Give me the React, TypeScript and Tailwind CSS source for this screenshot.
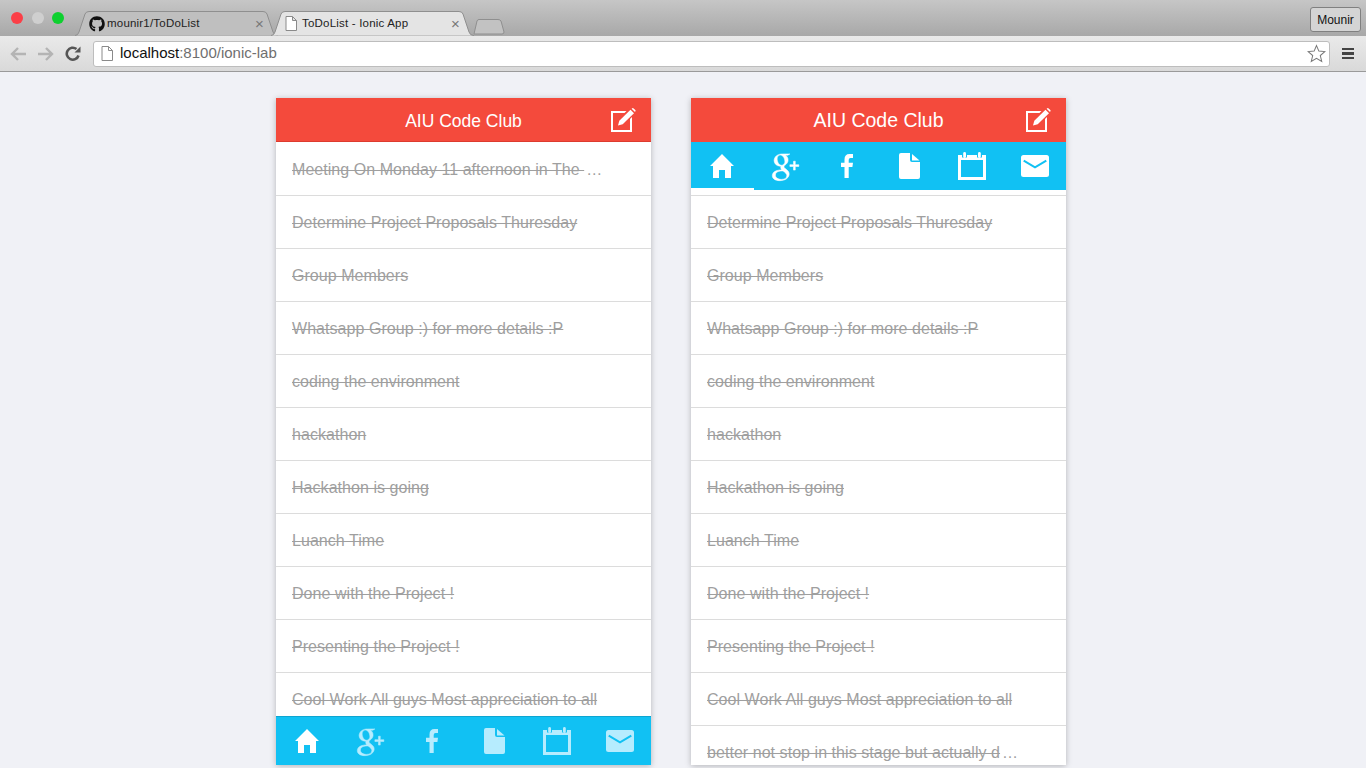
import React from 'react';
import { FaGithub } from 'react-icons/fa';
import { TiSocialGooglePlus } from 'react-icons/ti';

const TODOS = [
  'Determine Project Proposals Thuresday',
  'Group Members',
  'Whatsapp Group :) for more details :P',
  'coding the environment',
  'hackathon',
  'Hackathon is going',
  'Luanch Time',
  'Done with the Project !',
  'Presenting the Project !',
  'Cool Work All guys Most appreciation to all',
];

const HomeIcon = () => (
  <svg width="24" height="24" viewBox="0 0 24 24" fill="currentColor">
    <path d="M12 0 L24 12 H21 V24 H15 V16 H9 V24 H3 V12 H0 Z" />
  </svg>
);

const FacebookIcon = () => (
  <svg width="12" height="24" viewBox="0 0 12 24" fill="currentColor">
    <path d="M3.5 24 V13 H0 V8.8 H3.5 V5.5 Q3.5 0 8.5 0 H12 V4 H9.5 Q7.7 4 7.7 6 V8.8 H12 L11.4 13 H7.7 V24 Z" />
  </svg>
);

const DocIcon = () => (
  <svg width="21" height="26" viewBox="0 0 21 26" fill="currentColor">
    <path d="M2 0 H11 V7 Q11 9 13 9 H21 V24 A2 2 0 0 1 19 26 H2 A2 2 0 0 1 0 24 V2 A2 2 0 0 1 2 0 Z" />
    <path d="M13 1 L20.5 7.5 H13 Z" />
  </svg>
);

const CalendarIcon = () => (
  <svg width="28" height="28" viewBox="0 0 28 28" fill="currentColor">
    <path fillRule="evenodd" d="M0 3 H4 V5.5 H9 V3 H19 V5.5 H24 V3 H28 V28 H0 Z M3 8 V25 H25 V8 Z" />
    <rect x="5.2" y="0" width="2.8" height="6" rx="1.4" />
    <rect x="20" y="0" width="2.8" height="6" rx="1.4" />
  </svg>
);

const MailIcon = () => (
  <svg width="28" height="22" viewBox="0 0 28 22" fill="currentColor">
    <rect width="28" height="22" rx="2.5" />
    <path d="M2.7 5.7 L14 12.3 L25.3 5.7" fill="none" stroke="#11c1f3" strokeWidth="2" />
  </svg>
);

const ComposeIcon = () => (
  <svg width="25" height="24" viewBox="0 0 25 24" fill="white">
    <path d="M0 3 H15.5 L13.5 5 H2 V22 H19 V11 L21 9 V24 H0 Z" />
    <path d="M7 17.5 L8.3 12.8 L19.5 1.8 L23 5.2 L11.7 16.2 Z" />
    <path d="M20.6 0.7 L21.4 0.2 Q22 -0.1 22.6 0.4 L24.3 2.1 Q24.8 2.7 24.4 3.3 L24 3.9 Z" />
  </svg>
);

const TabIcons = ({ dim }: { dim: boolean }) => {
  const rest = dim ? 'text-[#b6ecfe]' : 'text-white';
  return (
    <>
      <div className="flex-1 flex items-center justify-center text-white"><HomeIcon /></div>
      <div className={`flex-1 flex items-center justify-center ${rest}`}><TiSocialGooglePlus size={43} className="stroke-current stroke-[0.3px]" /></div>
      <div className={`flex-1 flex items-center justify-center ${rest}`}><FacebookIcon /></div>
      <div className={`flex-1 flex items-center justify-center ${rest}`}><DocIcon /></div>
      <div className={`flex-1 flex items-center justify-center ${rest}`}><CalendarIcon /></div>
      <div className={`flex-1 flex items-center justify-center ${rest}`}><MailIcon /></div>
    </>
  );
};

const Header = ({ large }: { large: boolean }) => (
  <div className={`relative h-[44px] shrink-0 bg-[#f44a3c] flex items-center justify-center ${large ? 'pt-[1px]' : 'pt-[3px] border-b border-[#dd3b2f]'}`}>
    <span className={`text-white ${large ? 'text-[19.5px]' : 'text-[17.5px]'}`}>AIU Code Club</span>
    <div className="absolute right-[15px] top-[10px]"><ComposeIcon /></div>
  </div>
);

// cut = Ionic clipped this title with an ellipsis
const Row = ({ text, cut }: { text: string; cut?: boolean }) => (
  <div className="h-[53px] shrink-0 border-b border-[#dcdcdc] pl-4 pt-[2px] flex items-center whitespace-pre text-[16px] tracking-[0.05px] text-[#9f9f9f]">
    <span className="line-through">{text}</span>
    {cut && <span className="ml-[2px]">…</span>}
  </div>
);

const ToolbarPage = () => (
  <svg width="12" height="15" viewBox="0 0 12 15" fill="#fff" stroke="#8a8a8a">
    <path d="M1 .5 H7.5 L11.5 4.5 V14.5 H1 Z M7.5 .5 V4.5 H11.5" />
  </svg>
);

const BrowserTab = ({ title, active, icon }: { title: string; active: boolean; icon: React.ReactNode }) => (
  <div className="relative w-[197px] h-[25px] flex items-center pl-[14px] pr-[8px] -mr-[1px]">
    <svg className="absolute inset-0" width="210" height="25" viewBox="0 0 210 25">
      <path
        d="M0 24.5 Q3 24.5 4 21 L10 3 Q11 .5 14 .5 H188 Q191 .5 192 3 L198 21 Q199 24.5 203 24.5"
        fill={active ? '#e4e4e4' : '#bfbfbf'}
        stroke="#8f8f8f"
      />
    </svg>
    <div className="relative flex items-center gap-[2px] w-full text-[11.5px] text-[#222] tracking-[0.2px]">
      {icon}
      <span className="flex-1">{title}</span>
      <span className="text-[#777] text-[15px] leading-none">×</span>
    </div>
  </div>
);

const App: React.FC = () => {
  return (
    <div className="w-[1366px] h-[768px] overflow-hidden bg-[#f0f1f6] font-['Liberation_Sans',sans-serif]">
      {/* browser chrome */}
      <div className="h-[36px] bg-gradient-to-b from-[#c6c6c6] to-[#a8a8a8] flex items-end relative">
        <div className="w-[75px] h-full flex items-center pl-[11px] gap-[8.5px]">
          <span className="w-[12px] h-[12px] rounded-full bg-[#fb3f47]" />
          <span className="w-[12px] h-[12px] rounded-full bg-[#cfcfcf]" />
          <span className="w-[12px] h-[12px] rounded-full bg-[#0ed02f]" />
        </div>
        <BrowserTab title="mounir1/ToDoList" active={false} icon={<FaGithub size={16} color="#111" />} />
        <BrowserTab title="ToDoList - Ionic App" active={true} icon={<span className="mr-[3px] flex"><ToolbarPage /></span>} />
        <svg className="ml-[6px] mb-[1px]" width="32" height="16" viewBox="0 0 32 16">
          <path d="M1 15 L4 2 Q4.5 .5 6 .5 H25 Q27 .5 28 2 L31 13 Q31 15 29 15 Z" fill="#c2c2c2" stroke="#8f8f8f" />
        </svg>
        <div className="absolute right-[5px] top-[7px] w-[51px] h-[25px] border border-[#808080] rounded-[3px] bg-[#d4d4d4] flex items-center justify-center text-[12px] text-[#111]">
          Mounir
        </div>
      </div>
      <div className="h-[36px] bg-gradient-to-b from-[#eaeaea] to-[#d9d9d9] border-b border-[#9a9a9a] flex items-center">
        <div className="w-[93px] h-full flex items-center pl-[9px] gap-[10px]">
          <svg width="18" height="16" viewBox="0 0 18 16" fill="none" stroke="#b4b4b4" strokeWidth="2.4">
            <path d="M17 8 H3 M9 2 L3 8 L9 14" />
          </svg>
          <svg width="18" height="16" viewBox="0 0 18 16" fill="none" stroke="#b4b4b4" strokeWidth="2.4">
            <path d="M1 8 H15 M9 2 L15 8 L9 14" />
          </svg>
          <svg width="16" height="16" viewBox="0 0 16 16" fill="none" stroke="#555" strokeWidth="2.6">
            <path d="M13.5 9.5 A6 6 0 1 1 11.5 3" />
            <path d="M9.5 6.5 H15.5 V0.5 Z" fill="#555" stroke="none" />
          </svg>
        </div>
        <div className="w-[1237px] h-[26px] bg-white border border-[#bdbdbd] rounded-[3px] flex items-center pl-[7px] pr-[3px]">
          <ToolbarPage />
          <span className="ml-[7px] flex-1 text-[15px] text-[#111]">
            localhost<span className="text-[#6f6f6f]">:8100/ionic-lab</span>
          </span>
          <svg width="19" height="19" viewBox="0 0 24 24" fill="#fff" stroke="#777" strokeWidth="1.3">
            <path d="M12 2 L15 9 L22.6 9.6 L16.8 14.6 L18.6 22 L12 18 L5.4 22 L7.2 14.6 L1.4 9.6 L9 9 Z" />
          </svg>
        </div>
        <div className="flex-1 flex flex-col items-center gap-[2px]">
          <span className="w-[12px] h-[2.5px] bg-[#444]" />
          <span className="w-[12px] h-[2.5px] bg-[#444]" />
          <span className="w-[12px] h-[2.5px] bg-[#444]" />
        </div>
      </div>

      {/* phones */}
      <div className="flex gap-[40px] pt-[26px] pl-[276px]">
        <div className="w-[375px] h-[667px] bg-white shadow-[0_1px_6px_rgba(0,0,0,0.25)] flex flex-col overflow-hidden">
          <Header large={false} />
          <div className="flex-1 overflow-hidden flex flex-col pt-[1px]">
            <Row text="Meeting On Monday 11 afternoon in The " cut />
            {TODOS.map((t) => <Row key={t} text={t} />)}
          </div>
          <div className="h-[49px] shrink-0 bg-[#11c1f3] border-t border-[#0ea5d0] flex">
            <TabIcons dim={true} />
          </div>
        </div>

        <div className="w-[375px] h-[667px] bg-white shadow-[0_1px_6px_rgba(0,0,0,0.25)] flex flex-col overflow-hidden">
          <Header large={true} />
          <div className="h-[48px] shrink-0 bg-[#11c1f3] flex relative">
            <TabIcons dim={false} />
            <span className="absolute left-0 bottom-0 w-[63px] h-[2px] bg-white" />
          </div>
          <div className="h-[6px] shrink-0 border-b border-[#dcdcdc]" />
          <div className="flex-1 overflow-hidden flex flex-col">
            {TODOS.map((t) => <Row key={t} text={t} />)}
            <Row text="better not stop in this stage but actually d" cut />
          </div>
        </div>
      </div>
    </div>
  );
};

export default App;
